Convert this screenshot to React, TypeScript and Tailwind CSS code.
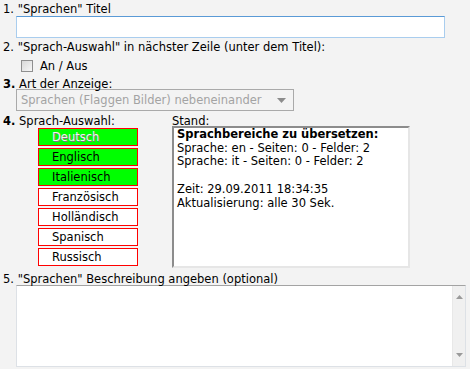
const sprachen = [
  { name: "Deutsch", aktiv: true, gesperrt: true },
  { name: "Englisch", aktiv: true },
  { name: "Italienisch", aktiv: true },
  { name: "Französisch" },
  { name: "Holländisch" },
  { name: "Spanisch" },
  { name: "Russisch" },
];

function SprachButton({ name, aktiv, gesperrt }: { name: string; aktiv?: boolean; gesperrt?: boolean }) {
  return (
    <div
      className={
        "h-[18px] w-[100px] border border-[#ff0000] pl-[13px] leading-[16px] " +
        (aktiv ? "bg-[#00ff00] " : "bg-white ") +
        (gesperrt ? "text-[#f4f4f4] [text-shadow:1px_1px_0_#7a7a7a]" : "text-black")
      }
    >
      {name}
    </div>
  );
}

export default function App() {
  return (
    <div className="h-[369px] w-[470px] overflow-hidden bg-[#f3f3f3] text-[11.5px] leading-[14px] text-black [font-family:'DejaVu_Sans',Verdana,sans-serif]">
      <div className="mt-[2px] h-[14px] pl-[3px]">1. "Sprachen" Titel</div>
      <div className="ml-[16px] h-[22px] w-[429px] border border-[#a9cdee] border-t-[#5a9ad6] bg-white" />

      <div className="mt-[2px] h-[14px] pl-[3px]">2. "Sprach-Auswahl" in nächster Zeile (unter dem Titel):</div>
      <div className="mt-[5px] flex h-[14px] items-center pl-[21px]">
        <div className="h-[12px] w-[12px] border border-[#8f8f8f] bg-gradient-to-br from-[#d8d8d8] to-[#f7f7f7]" />
        <span className="ml-[7px]">An / Aus</span>
      </div>

      <div className="mt-[4px] h-[12px] pl-[3px]">
        <b>3.</b> Art der Anzeige:
      </div>
      <div className="ml-[16px] flex h-[22px] w-[278px] items-center justify-between border border-[#a9a9a9] bg-[#f3f3f3] pl-[4px] pr-[7px] text-[#a3a3a3]">
        <span>Sprachen (Flaggen Bilder) nebeneinander</span>
        <svg width="9" height="5" viewBox="0 0 9 5">
          <path d="M0 0h9L4.5 5z" fill="#8c8c8c" />
        </svg>
      </div>

      <div className="mt-[3px] flex h-[12px]">
        <div className="w-[172px] pl-[3px]">
          <b>4.</b> Sprach-Auswahl:
        </div>
        <div>Stand:</div>
      </div>

      <div className="flex h-[142px]">
        <div className="flex w-[172px] flex-col gap-[2px] pl-[38px] pt-[2px]">
          {sprachen.map((s) => (
            <SprachButton key={s.name} {...s} />
          ))}
        </div>
        <div className="w-[238px] border-2 border-[#e6e6e6] border-l-[#8c8c8c] border-t-[#8c8c8c] bg-white pl-[3px] leading-[13.7px]">
          <div className="font-bold">Sprachbereiche zu übersetzen:</div>
          <div>Sprache: en - Seiten: 0 - Felder: 2</div>
          <div>Sprache: it - Seiten: 0 - Felder: 2</div>
          <div>&nbsp;</div>
          <div>Zeit: 29.09.2011 18:34:35</div>
          <div>Aktualisierung: alle 30 Sek.</div>
        </div>
      </div>

      <div className="mt-[4px] h-[13px] pl-[3px]">5. "Sprachen" Beschreibung angeben (optional)</div>
      <div className="ml-[16px] flex h-[82px] w-[450px] border border-[#dde1e6] border-t-[#a3a3a3] bg-white">
        <div className="flex-1" />
        <div className="flex w-[13px] flex-col items-center justify-between border-l border-[#e8e8e8] bg-[#f0f0f0] py-[9px]">
          <svg width="7" height="4" viewBox="0 0 7 4">
            <path d="M3.5 0L7 4H0z" fill="#9a9a9a" />
          </svg>
          <svg width="7" height="4" viewBox="0 0 7 4">
            <path d="M0 0h7L3.5 4z" fill="#9a9a9a" />
          </svg>
        </div>
      </div>
    </div>
  );
}
